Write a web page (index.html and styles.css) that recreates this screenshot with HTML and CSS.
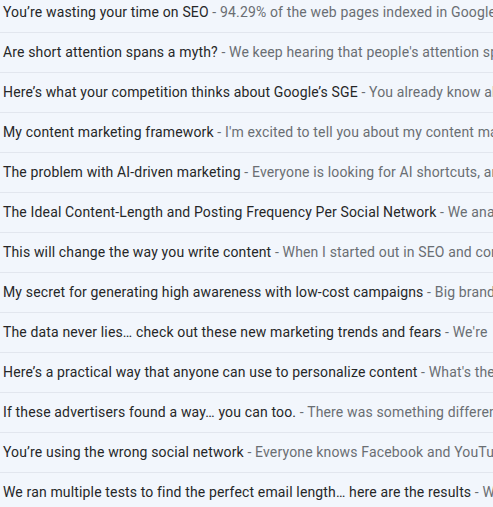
FILE: index.html
```html
<!DOCTYPE html>
<html>
<head>
<meta charset="utf-8">
<link rel="stylesheet" href="styles.css">
</head>
<body>
<div class="list">
  <div class="row"><span class="title">You’re wasting your time on SEO</span><span class="snippet"> - 94.29% of the web pages indexed in Google get zero traffic</span></div>
  <div class="row"><span class="title">Are short attention spans a myth?</span><span class="snippet"> - We keep hearing that people's attention spans are shrinking</span></div>
  <div class="row"><span class="title">Here’s what your competition thinks about Google’s SGE</span><span class="snippet"> - You already know about it</span></div>
  <div class="row"><span class="title">My content marketing framework</span><span class="snippet"> - I'm excited to tell you about my content marketing framework</span></div>
  <div class="row"><span class="title">The problem with AI-driven marketing</span><span class="snippet"> - Everyone is looking for AI shortcuts, and</span></div>
  <div class="row"><span class="title">The Ideal Content-Length and Posting Frequency Per Social Network</span><span class="snippet"> - We analyzed</span></div>
  <div class="row"><span class="title">This will change the way you write content</span><span class="snippet"> - When I started out in SEO and content</span></div>
  <div class="row"><span class="title">My secret for generating high awareness with low-cost campaigns</span><span class="snippet"> - Big brands</span></div>
  <div class="row"><span class="title">The data never lies… check out these new marketing trends and fears</span><span class="snippet"> - We're</span></div>
  <div class="row"><span class="title">Here’s a practical way that anyone can use to personalize content</span><span class="snippet"> - What's the</span></div>
  <div class="row"><span class="title">If these advertisers found a way… you can too.</span><span class="snippet"> - There was something different</span></div>
  <div class="row"><span class="title">You’re using the wrong social network</span><span class="snippet"> - Everyone knows Facebook and YouTube</span></div>
  <div class="row"><span class="title">We ran multiple tests to find the perfect email length… here are the results</span><span class="snippet"> - We tested</span></div>
</div>
</body>
</html>
```
FILE: styles.css
```css
html, body {
  margin: 0;
  padding: 0;
  background: #f2f6fc;
  overflow: hidden;
}
.list {
  margin-top: -7px;
  font-family: Roboto, "Liberation Sans", sans-serif;
  font-size: 14px;
  letter-spacing: 0.15px;
}
.row {
  height: 39px;
  line-height: 39px;
  border-bottom: 1px solid #e2e6ee;
  padding-left: 3px;
  white-space: nowrap;
  overflow: hidden;
}
.title {
  color: #262728;
}
.snippet {
  color: #6a6e73;
}
```
